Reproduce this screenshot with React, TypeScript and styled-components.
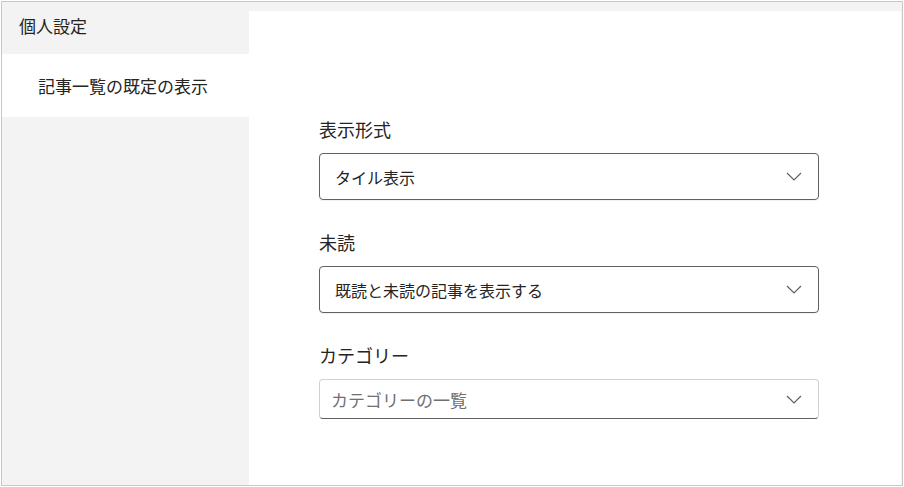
import React from "react";
import styled, { createGlobalStyle } from "styled-components";

const GlobalStyle = createGlobalStyle`
  html, body {
    margin: 0;
    padding: 0;
    background: #ffffff;
  }
  body {
    font-family: "Noto Sans CJK JP", "Noto Sans", sans-serif;
    color: #252423;
  }
`;

const Frame = styled.div`
  box-sizing: border-box;
  width: 902px;
  height: 485px;
  margin: 1px 0 0 1px;
  border: 1px solid #c8c8c8;
  background: #f3f3f3;
  display: flex;
`;

const Sidebar = styled.nav`
  width: 247px;
  display: flex;
  flex-direction: column;
`;

const SideHeader = styled.div`
  height: 52px;
  display: flex;
  align-items: center;
  padding-left: 17px;
  padding-bottom: 6px;
  box-sizing: border-box;
  font-size: 17px;
  color: #252423;
`;

const SideItem = styled.div<{ $active?: boolean }>`
  height: 63px;
  display: flex;
  align-items: center;
  padding-left: 36px;
  font-size: 17px;
  background: ${(p) => (p.$active ? "#ffffff" : "transparent")};
  color: #252423;
`;

const Main = styled.main`
  flex: 1;
  margin: 9px 1px 0 0;
  background: #ffffff;
  padding: 106px 0 0 70px;
`;

const Field = styled.div`
  width: 500px;
  margin-bottom: 30px;
`;

const Label = styled.div`
  font-size: 18px;
  line-height: 24px;
  margin-bottom: 12px;
  color: #252423;
`;

const Select = styled.div<{ $placeholder?: boolean }>`
  box-sizing: border-box;
  height: ${(p) => (p.$placeholder ? "40px" : "47px")};
  border: 1px solid ${(p) => (p.$placeholder ? "#d1d1d1" : "#616161")};
  border-bottom-color: #616161;
  border-radius: 4px;
  display: flex;
  align-items: center;
  justify-content: space-between;
  padding: 0 16px 0 ${(p) => (p.$placeholder ? "11px" : "15px")};
  font-size: ${(p) => (p.$placeholder ? "17px" : "16px")};
  color: ${(p) => (p.$placeholder ? "#707070" : "#252423")};
  box-shadow: ${(p) => (p.$placeholder ? "none" : "0 1px 1px rgba(0,0,0,0.06)")};
`;

const Chevron = () => (
  <svg width="16" height="9" viewBox="0 0 16 9" fill="none">
    <polyline points="1,1 8,8 15,1" stroke="#616161" strokeWidth="1.2" />
  </svg>
);

export default function App() {
  return (
    <>
      <GlobalStyle />
      <Frame>
        <Sidebar>
          <SideHeader>個人設定</SideHeader>
          <SideItem $active>記事一覧の既定の表示</SideItem>
        </Sidebar>
        <Main>
          <Field>
            <Label>表示形式</Label>
            <Select>
              <span>タイル表示</span>
              <Chevron />
            </Select>
          </Field>
          <Field>
            <Label>未読</Label>
            <Select>
              <span>既読と未読の記事を表示する</span>
              <Chevron />
            </Select>
          </Field>
          <Field>
            <Label>カテゴリー</Label>
            <Select $placeholder>
              <span>カテゴリーの一覧</span>
              <Chevron />
            </Select>
          </Field>
        </Main>
      </Frame>
    </>
  );
}
